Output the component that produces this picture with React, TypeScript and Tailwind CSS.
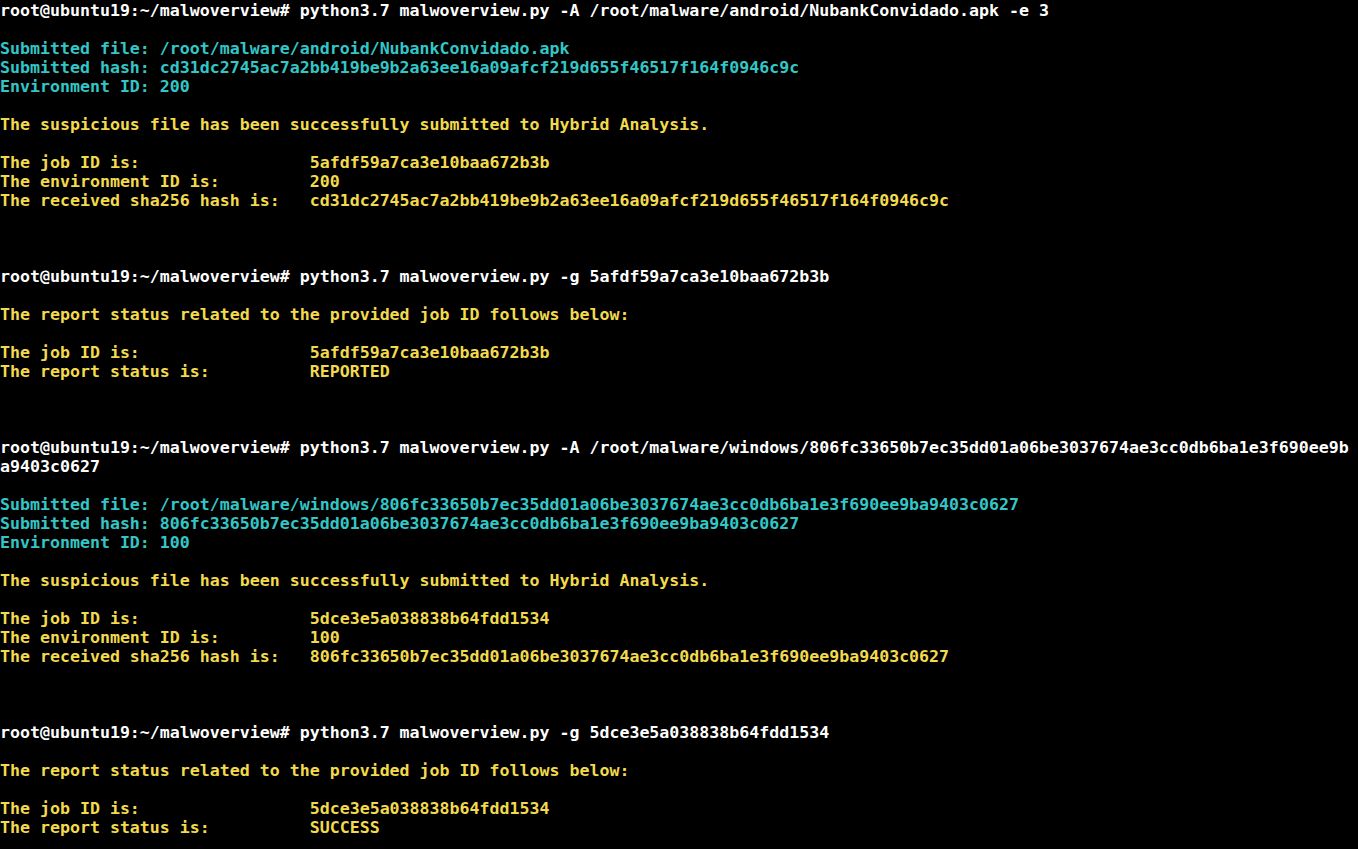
type Tone = "w" | "c" | "y";

const PROMPT = "root@ubuntu19:~/malwoverview# ";

const lines: [Tone, string][] = [
  ["w", PROMPT + "python3.7 malwoverview.py -A /root/malware/android/NubankConvidado.apk -e 3"],
  ["w", ""],
  ["c", "Submitted file: /root/malware/android/NubankConvidado.apk"],
  ["c", "Submitted hash: cd31dc2745ac7a2bb419be9b2a63ee16a09afcf219d655f46517f164f0946c9c"],
  ["c", "Environment ID: 200"],
  ["w", ""],
  ["y", "The suspicious file has been successfully submitted to Hybrid Analysis."],
  ["w", ""],
  ["y", "The job ID is:                 5afdf59a7ca3e10baa672b3b"],
  ["y", "The environment ID is:         200"],
  ["y", "The received sha256 hash is:   cd31dc2745ac7a2bb419be9b2a63ee16a09afcf219d655f46517f164f0946c9c"],
  ["w", ""],
  ["w", ""],
  ["w", ""],
  ["w", PROMPT + "python3.7 malwoverview.py -g 5afdf59a7ca3e10baa672b3b"],
  ["w", ""],
  ["y", "The report status related to the provided job ID follows below:"],
  ["w", ""],
  ["y", "The job ID is:                 5afdf59a7ca3e10baa672b3b"],
  ["y", "The report status is:          REPORTED"],
  ["w", ""],
  ["w", ""],
  ["w", ""],
  ["w", PROMPT + "python3.7 malwoverview.py -A /root/malware/windows/806fc33650b7ec35dd01a06be3037674ae3cc0db6ba1e3f690ee9b"],
  ["w", "a9403c0627"],
  ["w", ""],
  ["c", "Submitted file: /root/malware/windows/806fc33650b7ec35dd01a06be3037674ae3cc0db6ba1e3f690ee9ba9403c0627"],
  ["c", "Submitted hash: 806fc33650b7ec35dd01a06be3037674ae3cc0db6ba1e3f690ee9ba9403c0627"],
  ["c", "Environment ID: 100"],
  ["w", ""],
  ["y", "The suspicious file has been successfully submitted to Hybrid Analysis."],
  ["w", ""],
  ["y", "The job ID is:                 5dce3e5a038838b64fdd1534"],
  ["y", "The environment ID is:         100"],
  ["y", "The received sha256 hash is:   806fc33650b7ec35dd01a06be3037674ae3cc0db6ba1e3f690ee9ba9403c0627"],
  ["w", ""],
  ["w", ""],
  ["w", ""],
  ["w", PROMPT + "python3.7 malwoverview.py -g 5dce3e5a038838b64fdd1534"],
  ["w", ""],
  ["y", "The report status related to the provided job ID follows below:"],
  ["w", ""],
  ["y", "The job ID is:                 5dce3e5a038838b64fdd1534"],
  ["y", "The report status is:          SUCCESS"],
];

const tone = {
  w: "text-white",
  c: "text-[#33c6c6]",
  y: "text-[#f2da4c]",
};

export default function App() {
  return (
    <div className="h-[849px] w-[1358px] overflow-hidden bg-black pt-px">
      {/* terminal output */}
      <div className="font-['DejaVu_Sans_Mono',monospace] text-[16.6px] leading-[19px] font-bold">
        {lines.map(([t, text], i) => (
          <div key={i} className={`h-[19px] whitespace-pre ${tone[t]}`}>
            {text}
          </div>
        ))}
      </div>
    </div>
  );
}
